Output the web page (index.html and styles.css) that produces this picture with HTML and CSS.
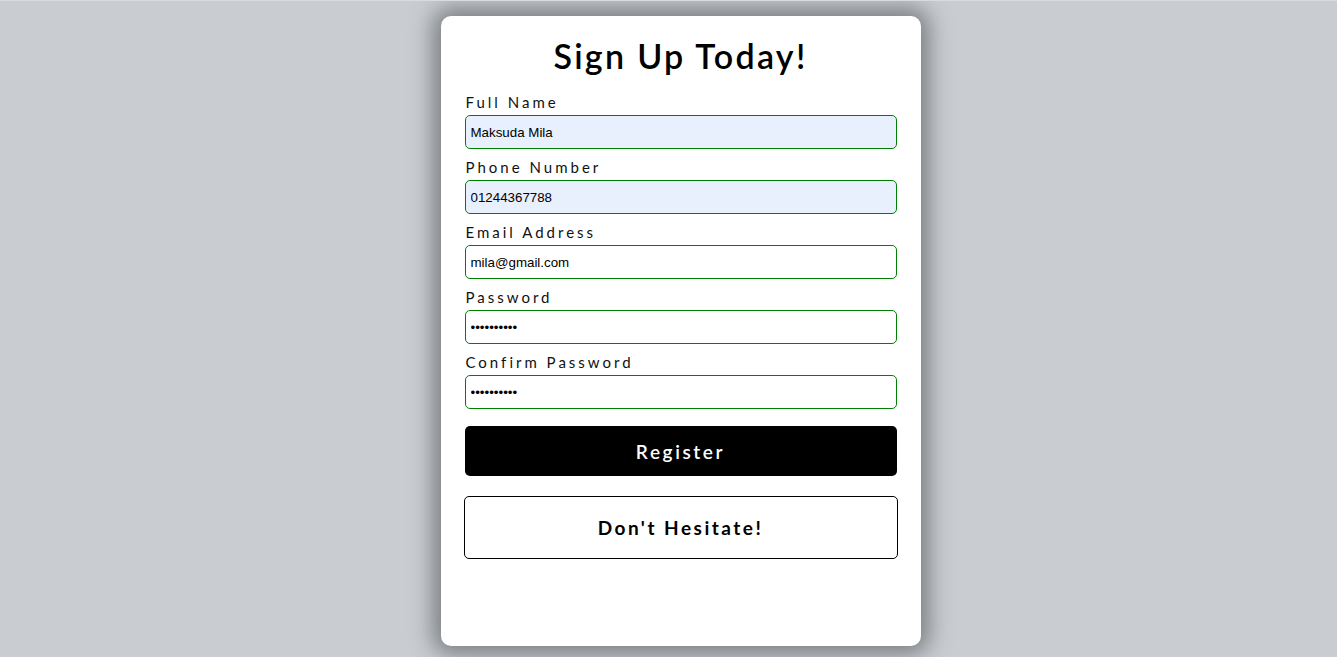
FILE: index.html
```html
<!DOCTYPE html>
<html lang="en">
<head>
<meta charset="utf-8">
<title>Sign Up Today!</title>
<link rel="stylesheet" href="styles.css">
</head>
<body>
<main class="page">
  <form class="card">
    <h1 class="title">Sign Up Today!</h1>
    <div class="field">
      <label class="label" for="name">Full Name</label>
      <input class="input filled" id="name" type="text" value="Maksuda Mila">
    </div>
    <div class="field">
      <label class="label" for="phone">Phone Number</label>
      <input class="input filled" id="phone" type="text" value="01244367788">
    </div>
    <div class="field">
      <label class="label" for="email">Email Address</label>
      <input class="input" id="email" type="text" value="mila@gmail.com">
    </div>
    <div class="field">
      <label class="label" for="pw">Password</label>
      <input class="input" id="pw" type="password" value="1234567890">
    </div>
    <div class="field">
      <label class="label" for="pw2">Confirm Password</label>
      <input class="input" id="pw2" type="password" value="1234567890">
    </div>
    <button class="register" type="button">Register</button>
    <div class="hesitate">Don't Hesitate!</div>
  </form>
</main>
</body>
</html>
```

FILE: styles.css
```css
html, body {
  margin: 0;
  padding: 0;
}
body {
  background: #c9cdd1;
  border-top: 1px solid #d9dcdf;
  height: 656px;
  overflow: hidden;
  font-family: Lato, "Open Sans", sans-serif;
}
.page {
  display: flex;
  justify-content: center;
  padding: 15px 0 0 24px;
}
.card {
  width: 480px;
  height: 630px;
  box-sizing: border-box;
  background: #fff;
  border-radius: 10px;
  box-shadow: 0 0 22px 8px rgba(70, 74, 78, 0.6);
  padding: 20px 24px 0;
  display: flex;
  flex-direction: column;
}
.title {
  margin: 0 0 17px;
  text-align: center;
  font-size: 34px;
  font-weight: 600;
  letter-spacing: 2.3px;
  line-height: 40px;
  color: #000;
}
.field {
  display: flex;
  flex-direction: column;
  margin-bottom: 9px;
}
.label {
  font-size: 15px;
  letter-spacing: 3px;
  line-height: 18px;
  color: #111;
  margin: 0 0 4px 1px;
}
.input {
  box-sizing: border-box;
  width: 432px;
  height: 34px;
  border: 1px solid #008000;
  border-radius: 5px;
  padding: 0 5px;
  font-family: "Liberation Sans", Arial, sans-serif;
  font-size: 13.33px;
  color: #000;
  background: #fff;
  outline: none;
}
.input.filled {
  background: #e8f0fe;
}
.register {
  margin-top: 8px;
  height: 50px;
  width: 432px;
  border: none;
  border-radius: 5px;
  background: #000;
  color: #fff;
  font-family: Lato, "Open Sans", sans-serif;
  font-size: 19px;
  font-weight: 600;
  letter-spacing: 2.6px;
}
.hesitate {
  margin: 20px -1px 0;
  height: 63px;
  box-sizing: border-box;
  border: 1px solid #000;
  border-radius: 5px;
  display: flex;
  align-items: center;
  justify-content: center;
  font-size: 19px;
  font-weight: 700;
  letter-spacing: 2.5px;
  color: #000;
}
```
